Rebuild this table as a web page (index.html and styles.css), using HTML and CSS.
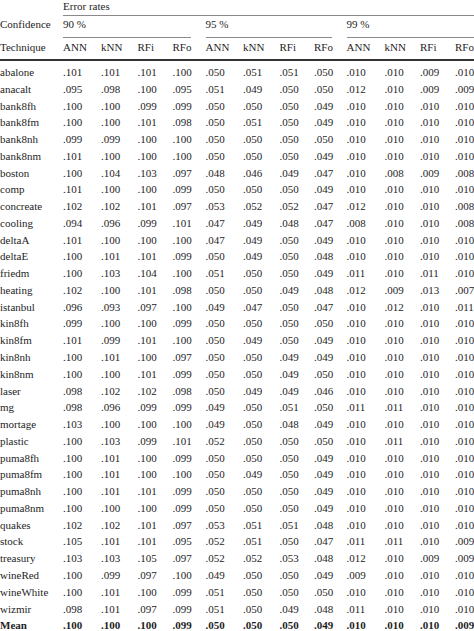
FILE: index.html
```html
<!DOCTYPE html>
<html>
<head>
<meta charset="utf-8">
<link rel="stylesheet" href="styles.css">
</head>
<body>
<div class="frame">
<table class="t">
<colgroup>
<col class="c0"><col class="ca"><col class="cb"><col class="cc"><col class="cd"><col class="ce"><col class="cf"><col class="cg"><col class="ch"><col class="ci"><col class="cj"><col class="ck"><col class="cl">
</colgroup>
<thead>
<tr class="h1"><td></td><td colspan="12" class="er">Error rates</td></tr>
<tr class="h2"><td>Confidence</td><td colspan="4"><div class="grp">90 %</div></td><td colspan="4"><div class="grp">95 %</div></td><td colspan="4"><div class="grp last">99 %</div></td></tr>
<tr class="h3"><td>Technique</td><td>ANN</td><td>kNN</td><td>RFi</td><td>RFo</td><td>ANN</td><td>kNN</td><td>RFi</td><td>RFo</td><td>ANN</td><td>kNN</td><td>RFi</td><td>RFo</td></tr>
</thead>
<tbody>
<tr class="first"><td>abalone</td><td>.101</td><td>.101</td><td>.101</td><td>.100</td><td>.050</td><td>.051</td><td>.051</td><td>.050</td><td>.010</td><td>.010</td><td>.009</td><td>.010</td></tr>
<tr><td>anacalt</td><td>.095</td><td>.098</td><td>.100</td><td>.095</td><td>.051</td><td>.049</td><td>.050</td><td>.050</td><td>.012</td><td>.010</td><td>.009</td><td>.009</td></tr>
<tr><td>bank8fh</td><td>.100</td><td>.100</td><td>.099</td><td>.099</td><td>.050</td><td>.050</td><td>.050</td><td>.049</td><td>.010</td><td>.010</td><td>.010</td><td>.010</td></tr>
<tr><td>bank8fm</td><td>.100</td><td>.100</td><td>.101</td><td>.098</td><td>.050</td><td>.051</td><td>.050</td><td>.049</td><td>.010</td><td>.010</td><td>.010</td><td>.010</td></tr>
<tr><td>bank8nh</td><td>.099</td><td>.099</td><td>.100</td><td>.100</td><td>.050</td><td>.050</td><td>.050</td><td>.050</td><td>.010</td><td>.010</td><td>.010</td><td>.010</td></tr>
<tr><td>bank8nm</td><td>.101</td><td>.100</td><td>.100</td><td>.100</td><td>.050</td><td>.050</td><td>.050</td><td>.049</td><td>.010</td><td>.010</td><td>.010</td><td>.010</td></tr>
<tr><td>boston</td><td>.100</td><td>.104</td><td>.103</td><td>.097</td><td>.048</td><td>.046</td><td>.049</td><td>.047</td><td>.010</td><td>.008</td><td>.009</td><td>.008</td></tr>
<tr><td>comp</td><td>.101</td><td>.100</td><td>.100</td><td>.099</td><td>.050</td><td>.050</td><td>.050</td><td>.049</td><td>.010</td><td>.010</td><td>.010</td><td>.010</td></tr>
<tr><td>concreate</td><td>.102</td><td>.102</td><td>.101</td><td>.097</td><td>.053</td><td>.052</td><td>.052</td><td>.047</td><td>.012</td><td>.010</td><td>.010</td><td>.008</td></tr>
<tr><td>cooling</td><td>.094</td><td>.096</td><td>.099</td><td>.101</td><td>.047</td><td>.049</td><td>.048</td><td>.047</td><td>.008</td><td>.010</td><td>.010</td><td>.008</td></tr>
<tr><td>deltaA</td><td>.101</td><td>.100</td><td>.100</td><td>.100</td><td>.047</td><td>.049</td><td>.050</td><td>.049</td><td>.010</td><td>.010</td><td>.010</td><td>.010</td></tr>
<tr><td>deltaE</td><td>.100</td><td>.101</td><td>.101</td><td>.099</td><td>.050</td><td>.049</td><td>.050</td><td>.048</td><td>.010</td><td>.010</td><td>.010</td><td>.010</td></tr>
<tr><td>friedm</td><td>.100</td><td>.103</td><td>.104</td><td>.100</td><td>.051</td><td>.050</td><td>.050</td><td>.049</td><td>.011</td><td>.010</td><td>.011</td><td>.010</td></tr>
<tr><td>heating</td><td>.102</td><td>.100</td><td>.101</td><td>.098</td><td>.050</td><td>.050</td><td>.049</td><td>.048</td><td>.012</td><td>.009</td><td>.013</td><td>.007</td></tr>
<tr><td>istanbul</td><td>.096</td><td>.093</td><td>.097</td><td>.100</td><td>.049</td><td>.047</td><td>.050</td><td>.047</td><td>.010</td><td>.012</td><td>.010</td><td>.011</td></tr>
<tr><td>kin8fh</td><td>.099</td><td>.100</td><td>.100</td><td>.099</td><td>.050</td><td>.050</td><td>.050</td><td>.050</td><td>.010</td><td>.010</td><td>.010</td><td>.010</td></tr>
<tr><td>kin8fm</td><td>.101</td><td>.099</td><td>.101</td><td>.100</td><td>.050</td><td>.049</td><td>.050</td><td>.049</td><td>.010</td><td>.010</td><td>.010</td><td>.010</td></tr>
<tr><td>kin8nh</td><td>.100</td><td>.101</td><td>.100</td><td>.097</td><td>.050</td><td>.050</td><td>.049</td><td>.049</td><td>.010</td><td>.010</td><td>.010</td><td>.010</td></tr>
<tr><td>kin8nm</td><td>.100</td><td>.100</td><td>.101</td><td>.099</td><td>.050</td><td>.050</td><td>.049</td><td>.050</td><td>.010</td><td>.010</td><td>.010</td><td>.010</td></tr>
<tr><td>laser</td><td>.098</td><td>.102</td><td>.102</td><td>.098</td><td>.050</td><td>.049</td><td>.049</td><td>.046</td><td>.010</td><td>.010</td><td>.010</td><td>.010</td></tr>
<tr><td>mg</td><td>.098</td><td>.096</td><td>.099</td><td>.099</td><td>.049</td><td>.050</td><td>.051</td><td>.050</td><td>.011</td><td>.011</td><td>.010</td><td>.010</td></tr>
<tr><td>mortage</td><td>.103</td><td>.100</td><td>.100</td><td>.100</td><td>.049</td><td>.050</td><td>.048</td><td>.049</td><td>.010</td><td>.010</td><td>.010</td><td>.010</td></tr>
<tr><td>plastic</td><td>.100</td><td>.103</td><td>.099</td><td>.101</td><td>.052</td><td>.050</td><td>.050</td><td>.050</td><td>.010</td><td>.011</td><td>.010</td><td>.010</td></tr>
<tr><td>puma8fh</td><td>.100</td><td>.101</td><td>.100</td><td>.099</td><td>.050</td><td>.050</td><td>.050</td><td>.049</td><td>.010</td><td>.010</td><td>.010</td><td>.010</td></tr>
<tr><td>puma8fm</td><td>.100</td><td>.101</td><td>.100</td><td>.100</td><td>.050</td><td>.049</td><td>.050</td><td>.049</td><td>.010</td><td>.010</td><td>.010</td><td>.010</td></tr>
<tr><td>puma8nh</td><td>.100</td><td>.101</td><td>.101</td><td>.099</td><td>.050</td><td>.050</td><td>.050</td><td>.049</td><td>.010</td><td>.010</td><td>.010</td><td>.010</td></tr>
<tr><td>puma8nm</td><td>.100</td><td>.100</td><td>.100</td><td>.099</td><td>.050</td><td>.050</td><td>.050</td><td>.049</td><td>.010</td><td>.010</td><td>.010</td><td>.010</td></tr>
<tr><td>quakes</td><td>.102</td><td>.102</td><td>.101</td><td>.097</td><td>.053</td><td>.051</td><td>.051</td><td>.048</td><td>.010</td><td>.010</td><td>.010</td><td>.010</td></tr>
<tr><td>stock</td><td>.105</td><td>.101</td><td>.101</td><td>.095</td><td>.052</td><td>.051</td><td>.050</td><td>.047</td><td>.011</td><td>.011</td><td>.010</td><td>.009</td></tr>
<tr><td>treasury</td><td>.103</td><td>.103</td><td>.105</td><td>.097</td><td>.052</td><td>.052</td><td>.053</td><td>.048</td><td>.012</td><td>.010</td><td>.009</td><td>.009</td></tr>
<tr><td>wineRed</td><td>.100</td><td>.099</td><td>.097</td><td>.100</td><td>.049</td><td>.050</td><td>.050</td><td>.049</td><td>.009</td><td>.010</td><td>.010</td><td>.010</td></tr>
<tr><td>wineWhite</td><td>.100</td><td>.101</td><td>.100</td><td>.099</td><td>.051</td><td>.050</td><td>.050</td><td>.050</td><td>.010</td><td>.010</td><td>.010</td><td>.010</td></tr>
<tr><td>wizmir</td><td>.098</td><td>.101</td><td>.097</td><td>.099</td><td>.051</td><td>.050</td><td>.049</td><td>.048</td><td>.011</td><td>.010</td><td>.010</td><td>.010</td></tr>
<tr class="mean"><td>Mean</td><td>.100</td><td>.100</td><td>.100</td><td>.099</td><td>.050</td><td>.050</td><td>.050</td><td>.049</td><td>.010</td><td>.010</td><td>.010</td><td>.009</td></tr>
</tbody>
</table>
</div>
</body>
</html>
```
FILE: styles.css
```css
html, body {
  margin: 0;
  padding: 0;
  background: #fff;
}

.frame {
  width: 474px;
  height: 631px;
  overflow: hidden;
}

.t {
  table-layout: fixed;
  border-collapse: separate;
  border-spacing: 0;
  width: 495px;
  font-family: "Liberation Serif", "Times New Roman", serif;
  font-size: 11px;
  color: #1e1e1e;
}

.t td {
  padding: 0;
  text-align: left;
  vertical-align: top;
  white-space: nowrap;
  line-height: 13px;
}

.c0 { width: 63px; }
.ca { width: 38px; }
.cb { width: 36.5px; }
.cc { width: 35px; }
.cd { width: 33px; }
.ce { width: 37.5px; }
.cf { width: 36.5px; }
.cg { width: 34.5px; }
.ch { width: 32.5px; }
.ci { width: 38px; }
.cj { width: 35.5px; }
.ck { width: 35px; }
.cl { width: 40px; }

.h1 td {
  padding-bottom: 2px;
}

.h1 .er {
  border-bottom: 1px solid #8a8a8a;
}

.h2 td {
  padding-top: 2px;
}

.grp {
  padding-bottom: 6px;
  margin-right: 14.5px;
  border-bottom: 1px solid #8a8a8a;
}

.grp.last {
  margin-right: 0;
}

.h3 td {
  padding-top: 3px;
  padding-bottom: 5px;
  border-bottom: 2px solid #333;
}

.t tbody td {
  line-height: 16.76px;
}

.t tbody tr.first td {
  padding-top: 3px;
}

.mean td {
  font-weight: bold;
}
```
